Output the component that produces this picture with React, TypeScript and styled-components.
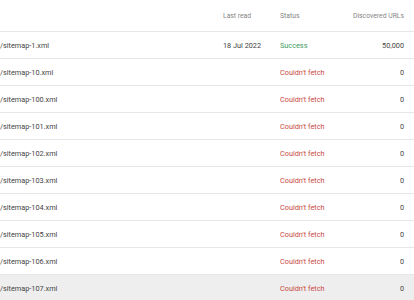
import React from 'react';
import styled, { createGlobalStyle } from 'styled-components';

const GlobalStyle = createGlobalStyle`
  html, body {
    margin: 0;
    padding: 0;
    background: #ffffff;
    font-family: Roboto, "Liberation Sans", Arial, sans-serif;
  }
`;

const Table = styled.div`
  width: 414px;
  overflow: hidden;
`;

const Row = styled.div<{ header?: boolean; highlighted?: boolean }>`
  display: grid;
  grid-template-columns: 1fr 57px 60px 64px;
  align-items: center;
  height: ${props => (props.header ? '31px' : '26px')};
  padding-right: 10px;
  border-bottom: 1px solid #e6e6e6;
  background-color: ${props => (props.highlighted ? '#eeeeee' : '#ffffff')};
  color: ${props => (props.header ? '#858585' : '#444444')};
  font-size: ${props => (props.header ? '6.8px' : '7.3px')};
  white-space: nowrap;
`;

const PathCell = styled.div`
  overflow: hidden;
`;

const Cell = styled.div<{ align?: 'right' }>`
  text-align: ${props => props.align || 'left'};
`;

const Status = styled.div<{ ok?: boolean }>`
  color: ${props => (props.ok ? '#449c63' : '#c94a44')};
`;

interface Sitemap {
  path: string;
  lastRead?: string;
  ok: boolean;
  urls: string;
}

const sitemaps: Sitemap[] = [
  { path: '/sitemap-1.xml', lastRead: '18 Jul 2022', ok: true, urls: '50,000' },
  { path: '/sitemap-10.xml', ok: false, urls: '0' },
  { path: '/sitemap-100.xml', ok: false, urls: '0' },
  { path: '/sitemap-101.xml', ok: false, urls: '0' },
  { path: '/sitemap-102.xml', ok: false, urls: '0' },
  { path: '/sitemap-103.xml', ok: false, urls: '0' },
  { path: '/sitemap-104.xml', ok: false, urls: '0' },
  { path: '/sitemap-105.xml', ok: false, urls: '0' },
  { path: '/sitemap-106.xml', ok: false, urls: '0' },
  { path: '/sitemap-107.xml', ok: false, urls: '0' },
];

const App: React.FC = () => {
  return (
    <>
      <GlobalStyle />
      <Table>
        <Row header>
          <PathCell />
          <Cell>Last read</Cell>
          <Cell>Status</Cell>
          <Cell align="right">Discovered URLs</Cell>
        </Row>
        {sitemaps.map((s, i) => (
          <Row key={s.path} highlighted={i === sitemaps.length - 1}>
            <PathCell>{s.path}</PathCell>
            <Cell>{s.lastRead}</Cell>
            <Status ok={s.ok}>{s.ok ? 'Success' : "Couldn't fetch"}</Status>
            <Cell align="right">{s.urls}</Cell>
          </Row>
        ))}
      </Table>
    </>
  );
};

export default App;
